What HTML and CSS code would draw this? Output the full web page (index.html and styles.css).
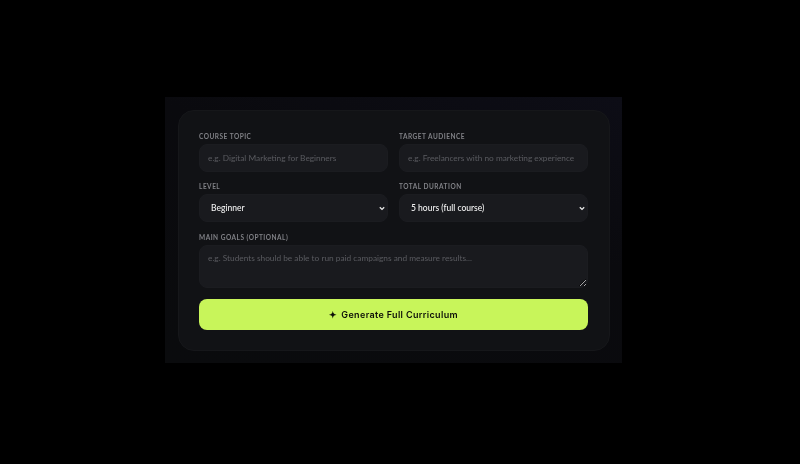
FILE: index.html
```html
<!DOCTYPE html>
<html lang="en">
<head>
<meta charset="utf-8">
<title>Generate Curriculum</title>
<link rel="stylesheet" href="styles.css">
</head>
<body>
<main class="panel">
  <form class="card">
    <div class="row">
      <div class="field">
        <label class="label" for="topic">COURSE TOPIC</label>
        <input class="control" id="topic" type="text" placeholder="e.g. Digital Marketing for Beginners">
      </div>
      <div class="field">
        <label class="label" for="audience">TARGET AUDIENCE</label>
        <input class="control" id="audience" type="text" placeholder="e.g. Freelancers with no marketing experience">
      </div>
    </div>
    <div class="row row-last">
      <div class="field">
        <label class="label" for="level">LEVEL</label>
        <select class="control select" id="level"><option>Beginner</option><option>Intermediate</option></select>
      </div>
      <div class="field">
        <label class="label" for="duration">TOTAL DURATION</label>
        <select class="control select" id="duration"><option>5 hours (full course)</option><option>10 hours</option></select>
      </div>
    </div>
    <div class="field">
      <label class="label" for="goals">MAIN GOALS (OPTIONAL)</label>
      <textarea class="control area" id="goals" placeholder="e.g. Students should be able to run paid campaigns and measure results..."></textarea>
    </div>
    <button class="submit" type="button"><span class="spark">✦</span><span class="submit-text">Generate Full Curriculum</span></button>
  </form>
</main>
</body>
</html>
```
FILE: styles.css
```css
* { box-sizing: border-box; }
html, body { height: 100%; }
body {
  margin: 0;
  background: #000;
  padding: 97px 0 0 165px;
  font-family: "Lato", "Liberation Sans", sans-serif;
  overflow: hidden;
}
.panel {
  width: 457px;
  height: 266px;
  padding: 13px 12px 12px 13px;
  background: linear-gradient(200deg, #0d0d16 0%, #0a0a0e 40%, #0a0b0d 100%);
  filter: blur(0.4px);
}
.card {
  width: 432px;
  height: 241px;
  padding: 20px 21px 20px 20px;
  background: #111215;
  border: 1px solid #16171a;
  border-radius: 16px;
  display: flex;
  flex-direction: column;
}
.row {
  display: grid;
  grid-template-columns: 189px 189px;
  column-gap: 11px;
  margin-bottom: 9px;
}
.row-last { margin-bottom: 10px; }
.field { display: flex; flex-direction: column; flex: none; }
.label {
  font-size: 6.5px;
  line-height: 12px;
  height: 13px;
  letter-spacing: 0.5px;
  font-weight: 700;
  color: #808186;
}
.control {
  width: 189px;
  height: 28px;
  background: #191a1e;
  border: 1px solid #1b1c20;
  border-radius: 8px;
  color: #f2f2f2;
  font-family: "Lato", "Liberation Sans", sans-serif;
  font-size: 8.3px;
  padding: 0 8px;
  outline: none;
}
.control::placeholder { color: #5a5b60; opacity: 1; }
.select {
  appearance: none;
  padding-left: 11px;
  font-size: 8.5px;
  font-weight: 500;
  background-image: url("data:image/svg+xml,%3Csvg xmlns='http://www.w3.org/2000/svg' width='6' height='5' viewBox='0 0 6 5'%3E%3Cpath d='M.8 1.2 3 3.4l2.2-2.2' fill='none' stroke='%23e8e8e8' stroke-width='1.3'/%3E%3C/svg%3E");
  background-repeat: no-repeat;
  background-position: right 2px center;
}
.select option { background: #191a1e; }
.area {
  display: block;
  width: 389px;
  height: 43px;
  padding: 7px 8px;
  resize: vertical;
}
.submit {
  flex: none;
  margin-top: 11px;
  height: 31px;
  width: 389px;
  border: 0;
  border-radius: 8px;
  background: #c8f55a;
  color: #0d0f08;
  font-family: "Inter", sans-serif;
  font-size: 9px;
  font-weight: 600;
  letter-spacing: 0.35px;
  display: flex;
  align-items: center;
  justify-content: center;
  gap: 4px;
}
.spark { font-size: 9px; }
```
